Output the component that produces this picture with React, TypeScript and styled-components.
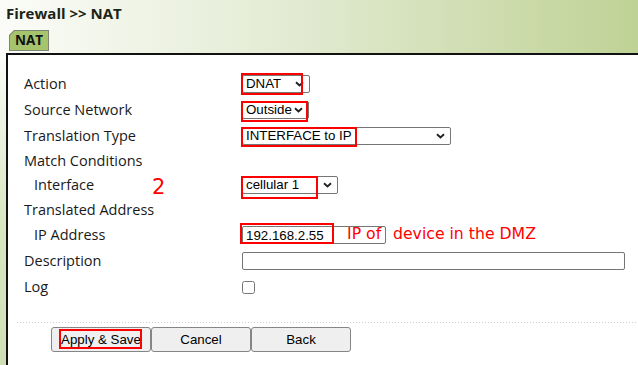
import styled, { createGlobalStyle } from 'styled-components';

const GlobalStyle = createGlobalStyle`
  html, body {
    margin: 0;
    padding: 0;
    background: #fff;
  }
  body {
    font-family: 'Open Sans', 'Liberation Sans', sans-serif;
  }
`;

const chevron =
  "url(\"data:image/svg+xml,%3Csvg xmlns='http://www.w3.org/2000/svg' width='9' height='6' viewBox='0 0 9 6'%3E%3Cpath d='M1 1.2l3.5 3.3 3.5-3.3' fill='none' stroke='%23222' stroke-width='1.9'/%3E%3C/svg%3E\")";

const Page = styled.div`
  width: 638px;
  height: 365px;
  overflow: hidden;
  display: flex;
  flex-direction: column;
`;

const Header = styled.div`
  height: 53px;
  display: flex;
  flex-direction: column;
  justify-content: space-between;
  background: linear-gradient(to right, #fbfcf8 0%, #e3ebd3 45%, #bfd295 100%);
`;

const Title = styled.div`
  padding: 3px 0 0 6px;
  font: bold 15px/20px 'Open Sans', sans-serif;
  color: #1b2416;
`;

const TabStrip = styled.div`
  display: flex;
  padding: 0 0 2px 9px;
`;

const TabEdge = styled.div`
  padding: 1px;
  background: #7d8575;
  clip-path: polygon(5px 0, 100% 0, 100% 100%, 0 100%, 0 5px);
`;

const Tab = styled.div`
  height: 19px;
  padding: 0 5px;
  background: #a6c46c;
  font: bold 13.5px/19px 'Open Sans', sans-serif;
  color: #111;
  clip-path: polygon(4.5px 0, 100% 0, 100% 100%, 0 100%, 0 4.5px);
`;

const Body = styled.div`
  flex: 1;
  display: flex;
`;

const Strip = styled.div`
  width: 6px;
  background: linear-gradient(to bottom, #fbfdf8 0%, #d8e6c2 55%, #cfe0b5 100%);
`;

const Panel = styled.div`
  flex: 1;
  border-left: 2px solid #111;
  border-top: 2px solid #111;
  background: #fff;
  padding: 16px 0 0 9px;
`;

const Form = styled.div`
  display: flex;
  flex-direction: column;
`;

const Row = styled.div<{ $h: number }>`
  position: relative;
  height: ${p => p.$h}px;
  display: grid;
  grid-template-columns: 225px 1fr;
  align-items: center;
`;

const Label = styled.div<{ $indent?: boolean }>`
  padding-left: ${p => (p.$indent ? 17 : 7)}px;
  font-size: 14.5px;
  line-height: 20px;
  color: #1a1a1a;
  white-space: nowrap;
`;

const Cell = styled.div`
  display: flex;
  align-items: center;
`;

const Field = styled.span`
  position: relative;
  display: inline-flex;
`;

const Select = styled.select<{ $w: number }>`
  appearance: none;
  box-sizing: border-box;
  width: ${p => p.$w}px;
  height: 18px;
  margin: 0;
  padding: 0 16px 0 3px;
  font: 13.3px/16px 'Liberation Sans', Arial, sans-serif;
  color: #000;
  background: #fff ${chevron} no-repeat right 5px center;
  border: 1px solid #767676;
  border-radius: 2px;
`;

const TextInput = styled.input<{ $w: number }>`
  box-sizing: border-box;
  width: ${p => p.$w}px;
  height: 18px;
  margin: 0;
  padding: 0 3px;
  font: 13.3px 'Liberation Sans', Arial, sans-serif;
  color: #000;
  border: 1px solid #767676;
  border-radius: 2px;
`;

const Check = styled.input`
  width: 13px;
  height: 13px;
  margin: 0;
`;

// red annotation frame drawn over a control
const Mark = styled.span<{ $l: number; $t: number; $w: number; $h: number }>`
  position: absolute;
  left: ${p => p.$l}px;
  top: ${p => p.$t}px;
  width: ${p => p.$w}px;
  height: ${p => p.$h}px;
  box-sizing: border-box;
  border: 2px solid #ff0000;
  pointer-events: none;
`;

const Note = styled.span<{ $l: number; $t: number; $size: number }>`
  position: absolute;
  left: ${p => p.$l}px;
  top: ${p => p.$t}px;
  font: ${p => p.$size}px/1 'DejaVu Sans', sans-serif;
  color: #ff0000;
  white-space: nowrap;
`;

const Dots = styled.div`
  height: 1px;
  margin-top: 22px;
  background-image: repeating-linear-gradient(to right, #cfcfcf 0 1px, transparent 1px 3px);
`;

const ButtonBar = styled.div`
  display: flex;
  margin-top: 4px;
  padding-left: 34px;
`;

const Button = styled.button`
  position: relative;
  width: 100px;
  height: 25px;
  margin: 0;
  padding: 0;
  font: 13.3px 'Liberation Sans', Arial, sans-serif;
  color: #000;
  background: #efefef;
  border: 1px solid #858585;
  border-radius: 3px;
`;

export default function App() {
  return (
    <Page>
      <GlobalStyle />
      <Header>
        <Title>Firewall &gt;&gt; NAT</Title>
        <TabStrip>
          <TabEdge>
            <Tab>NAT</Tab>
          </TabEdge>
        </TabStrip>
      </Header>
      <Body>
        <Strip />
        <Panel>
          <Form>
            <Row $h={26}>
              <Label>Action</Label>
              <Cell>
                <Field>
                  <Select $w={68} defaultValue="DNAT">
                    <option>DNAT</option>
                    <option>SNAT</option>
                  </Select>
                  <Mark $l={-1} $t={-2} $w={62} $h={22} />
                </Field>
              </Cell>
            </Row>
            <Row $h={26}>
              <Label>Source Network</Label>
              <Cell>
                <Field>
                  <Select $w={67} defaultValue="Outside">
                    <option>Outside</option>
                    <option>Inside</option>
                  </Select>
                  <Mark $l={-1} $t={0} $w={67} $h={21} />
                </Field>
              </Cell>
            </Row>
            <Row $h={26}>
              <Label>Translation Type</Label>
              <Cell>
                <Field>
                  <Select $w={209} defaultValue="INTERFACE to IP">
                    <option>INTERFACE to IP</option>
                    <option>IP to IP</option>
                  </Select>
                  <Mark $l={-1} $t={0} $w={116} $h={20} />
                </Field>
              </Cell>
            </Row>
            <Row $h={23}>
              <Label>Match Conditions</Label>
            </Row>
            <Row $h={26}>
              <Label $indent>Interface</Label>
              <Note $l={135} $t={5} $size={21}>2</Note>
              <Cell>
                <Field>
                  <Select $w={96} defaultValue="cellular 1">
                    <option>cellular 1</option>
                    <option>ethernet 0</option>
                  </Select>
                  <Mark $l={-1} $t={0} $w={77} $h={23} />
                </Field>
              </Cell>
            </Row>
            <Row $h={24}>
              <Label>Translated Address</Label>
            </Row>
            <Row $h={26}>
              <Label $indent>IP Address</Label>
              <Cell>
                <Field>
                  <TextInput $w={144} defaultValue="192.168.2.55" />
                  <Mark $l={-2} $t={-3} $w={94} $h={21} />
                  <Note $l={105} $t={0} $size={15.7}>IP of</Note>
                  <Note $l={151} $t={0} $size={15.7}>device in the DMZ</Note>
                </Field>
              </Cell>
            </Row>
            <Row $h={26}>
              <Label>Description</Label>
              <Cell>
                <TextInput $w={383} defaultValue="" />
              </Cell>
            </Row>
            <Row $h={26}>
              <Label>Log</Label>
              <Cell>
                <Check type="checkbox" />
              </Cell>
            </Row>
          </Form>
          <Dots />
          <ButtonBar>
            <Button>
              Apply &amp; Save
              <Mark $l={7} $t={1} $w={83} $h={20} />
            </Button>
            <Button>Cancel</Button>
            <Button>Back</Button>
          </ButtonBar>
        </Panel>
      </Body>
    </Page>
  );
}
